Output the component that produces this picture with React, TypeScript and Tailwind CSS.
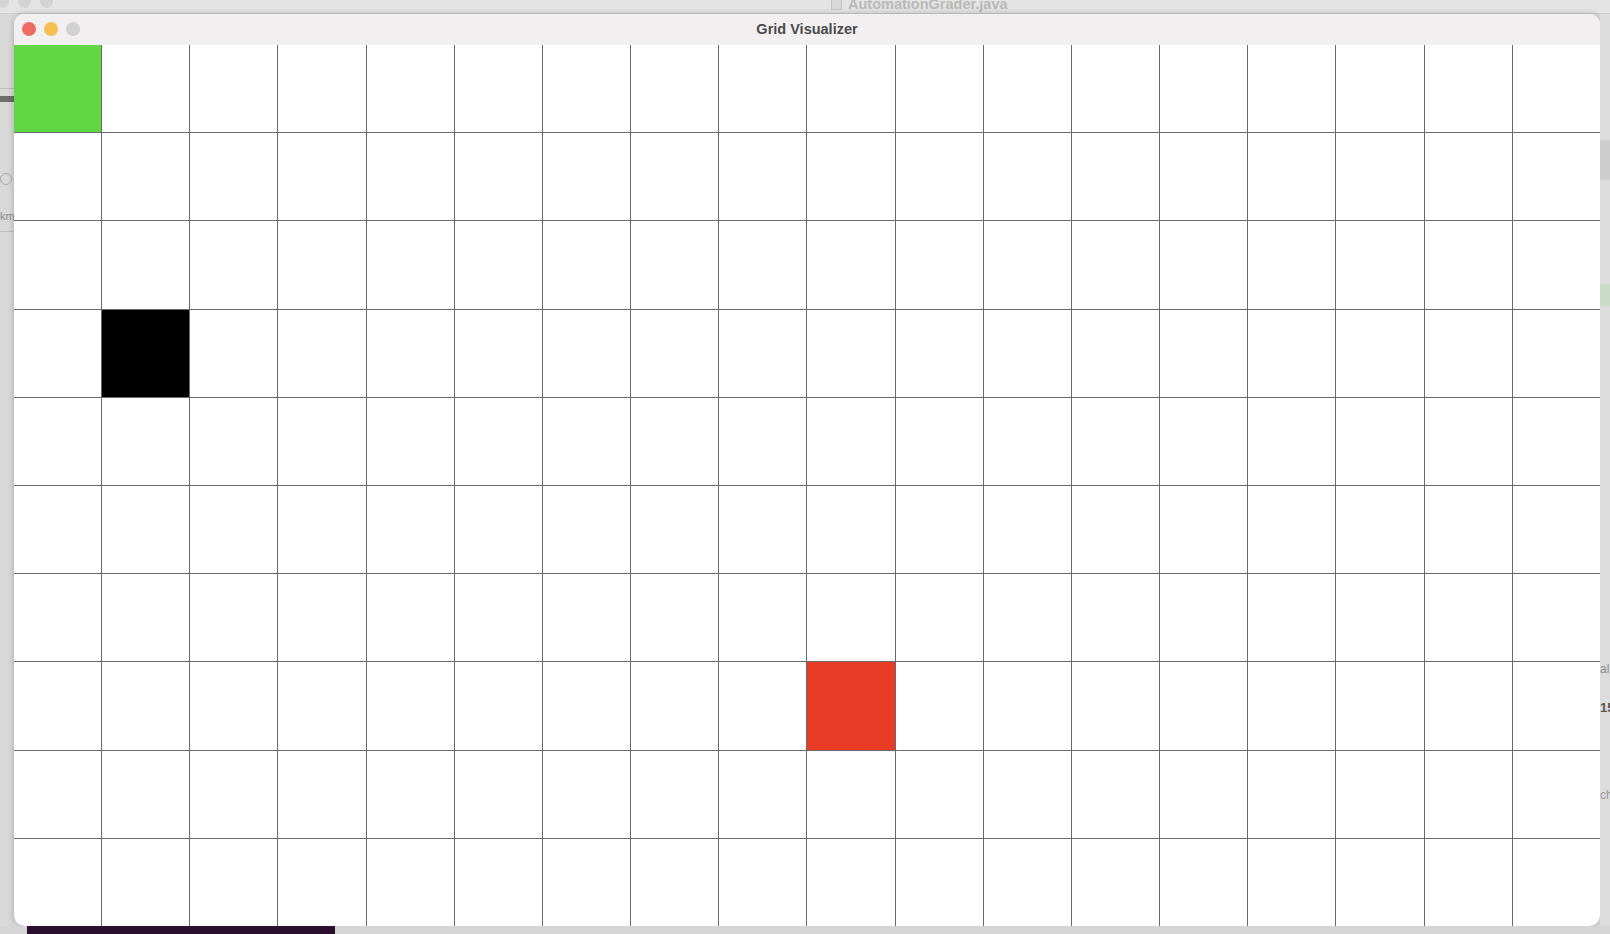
import React from "react";

const COLS = 18;
const ROWS = 10;

const special: Record<string, string> = {
  "0-0": "bg-[#62d744]",
  "3-1": "bg-black",
  "7-9": "bg-[#e83a24]",
};

const Cell = ({ r, c }: { r: number; c: number }) => {
  const fill = special[`${r}-${c}`] ?? "bg-white";
  return <div className={fill} />;
};

const App = () => {
  const cells = [];
  for (let r = 0; r < ROWS; r++) {
    for (let c = 0; c < COLS; c++) {
      cells.push(<Cell key={`${r}-${c}`} r={r} c={c} />);
    }
  }

  return (
    <div
      className="w-[1610px] h-[934px] overflow-hidden flex flex-col bg-[#dcdcdc]"
      style={{ fontFamily: '"Liberation Sans", Arial, sans-serif' }}
    >
      {/* blurred desktop strip above the window */}
      <div className="h-[14px] shrink-0 flex items-end bg-[#e4e4e4] border-b border-[#cfcfcf] overflow-hidden">
        <div className="flex gap-[9px] -ml-[4px] mb-[5px]">
          <span className="w-[13px] h-[13px] rounded-full bg-[#d3d3d3]" />
          <span className="w-[13px] h-[13px] rounded-full bg-[#d3d3d3]" />
          <span className="w-[13px] h-[13px] rounded-full bg-[#d3d3d3]" />
        </div>
        <div className="ml-[778px] mb-[2px] flex items-center gap-[6px] text-[14.5px] font-bold text-[#b9b9b9] leading-none">
          <span className="w-[11px] h-[13px] bg-[#d9d9d9] border border-[#c4c4c4]" />
          <span>AutomationGrader.java</span>
        </div>
      </div>

      <div className="h-[912px] shrink-0 flex">
        {/* left edge of the window behind */}
        <div className="w-[14px] shrink-0 flex flex-col bg-[#d9d9d9] overflow-hidden">
          <div className="h-px mt-[74px] bg-[#bdbdbd]" />
          <div className="h-[6px] mt-[7px] bg-[#6d6d6d]" />
          <div className="w-[12px] h-[12px] mt-[71px] rounded-full border border-[#a8a8a8]" />
          <div className="mt-[26px] text-[11px] text-[#8a8a8a] leading-none">km</div>
          <div className="h-px mt-[9px] bg-[#bdbdbd]" />
        </div>

        {/* the window */}
        <div className="w-[1586px] shrink-0 flex flex-col rounded-[10px] overflow-hidden bg-white shadow-[0_0_6px_rgba(0,0,0,0.25)]">
          <div className="relative h-[31px] shrink-0 flex items-center justify-center bg-[#f1efef]">
            <div className="absolute left-[8px] top-[8px] flex gap-[8px]">
              <span className="w-[14px] h-[14px] rounded-full bg-[#ee6b5f]" />
              <span className="w-[14px] h-[14px] rounded-full bg-[#f5be4f]" />
              <span className="w-[14px] h-[14px] rounded-full bg-[#d2d1d1]" />
            </div>
            <span className="text-[14.5px] font-bold text-[#4b4b4b]">Grid Visualizer</span>
          </div>
          <div className="flex-1 grid grid-cols-18 grid-rows-10 gap-px bg-[#6a6a6a]">
            {cells}
          </div>
        </div>

        {/* right edge of the window behind */}
        <div className="w-[10px] shrink-0 flex flex-col bg-[#dcdcdc] overflow-hidden">
          <div className="h-[40px] mt-[126px] bg-[#cdcdcd]" />
          <div className="h-[22px] mt-[104px] bg-[#c9dcc6]" />
          <div className="mt-[357px] text-[12px] text-[#8a8a8a] leading-none">al</div>
          <div className="mt-[26px] text-[13px] font-bold text-[#555] leading-none">15</div>
          <div className="mt-[75px] text-[12px] text-[#9a9a9a] leading-none">ch</div>
        </div>
      </div>

      {/* dock strip below */}
      <div className="h-[8px] shrink-0 flex bg-[#d5d5d5]">
        <div className="w-[308px] ml-[27px] bg-[#2c0f2f]" />
      </div>
    </div>
  );
};

export default App;
